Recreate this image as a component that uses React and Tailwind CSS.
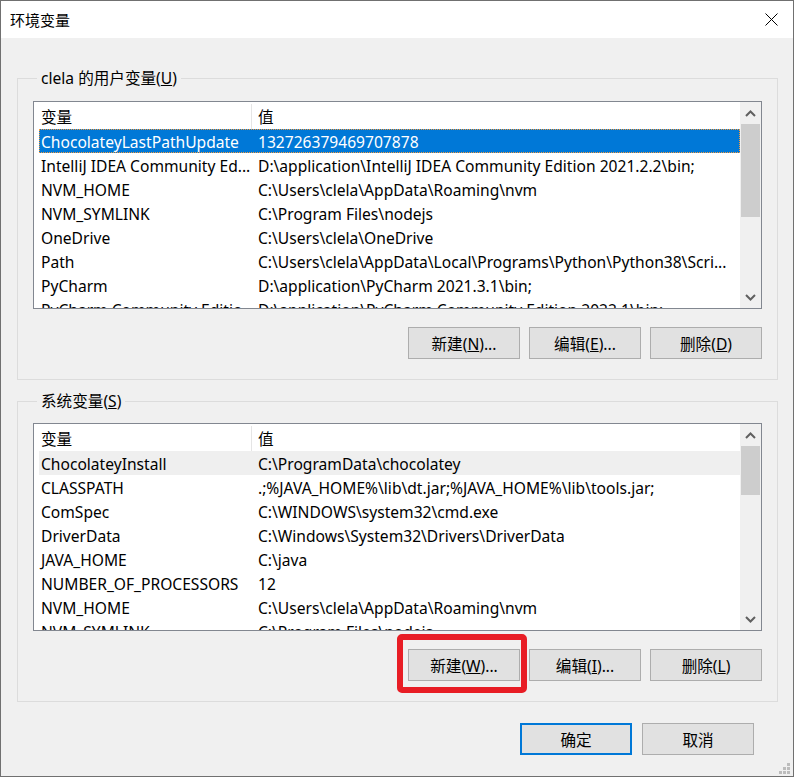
import React from "react";

const userVars = [
  ["ChocolateyLastPathUpdate", "132726379469707878"],
  ["IntelliJ IDEA Community Ed...", "D:\\application\\IntelliJ IDEA Community Edition 2021.2.2\\bin;"],
  ["NVM_HOME", "C:\\Users\\clela\\AppData\\Roaming\\nvm"],
  ["NVM_SYMLINK", "C:\\Program Files\\nodejs"],
  ["OneDrive", "C:\\Users\\clela\\OneDrive"],
  ["Path", "C:\\Users\\clela\\AppData\\Local\\Programs\\Python\\Python38\\Scri..."],
  ["PyCharm", "D:\\application\\PyCharm 2021.3.1\\bin;"],
  ["PyCharm Community Editio...", "D:\\application\\PyCharm Community Edition 2022.1\\bin;"],
];

const systemVars = [
  ["ChocolateyInstall", "C:\\ProgramData\\chocolatey"],
  ["CLASSPATH", ".;%JAVA_HOME%\\lib\\dt.jar;%JAVA_HOME%\\lib\\tools.jar;"],
  ["ComSpec", "C:\\WINDOWS\\system32\\cmd.exe"],
  ["DriverData", "C:\\Windows\\System32\\Drivers\\DriverData"],
  ["JAVA_HOME", "C:\\java"],
  ["NUMBER_OF_PROCESSORS", "12"],
  ["NVM_HOME", "C:\\Users\\clela\\AppData\\Roaming\\nvm"],
  ["NVM_SYMLINK", "C:\\Program Files\\nodejs"],
];

function Chevron({ up }) {
  return (
    <svg width="11" height="7" viewBox="0 0 11 7">
      <polyline
        points={up ? "1,6 5.5,1.5 10,6" : "1,1 5.5,5.5 10,1"}
        fill="none"
        stroke="#606060"
        strokeWidth="2"
      />
    </svg>
  );
}

// Win32-style list view with a two-column header and a vertical scrollbar
function VarList({ rows, selected, focused, thumbTop, thumbHeight }) {
  return (
    <div className="flex h-[208px] border border-[#828790] bg-white overflow-hidden">
      <div className="flex-1 flex flex-col overflow-hidden">
        <div className="flex h-[27px] shrink-0 items-center pt-[2px]">
          <div className="w-[218px] h-full flex items-center pl-[7px] border-r border-[#e5e5e5]">变量</div>
          <div className="pl-[6px]">值</div>
        </div>
        {rows.map(([name, value], i) => {
          const isSel = i === selected;
          const rowCls = isSel
            ? focused
              ? "bg-[#0078d7] text-white outline-1 outline-dotted -outline-offset-1 outline-[#f59a3c]"
              : "bg-[#efefef]"
            : "";
          return (
            <div key={name} className={`flex h-[24px] shrink-0 items-center pt-px ml-[5px] whitespace-nowrap ${rowCls}`}>
              <div className="w-[213px] shrink-0 pl-[2px] overflow-hidden">{name}</div>
              <div className="pl-[6px] overflow-hidden">{value}</div>
            </div>
          );
        })}
      </div>
      <div className="w-[21px] shrink-0 flex flex-col bg-[#f0f0f0]">
        <div className="h-[22px] flex items-center justify-center">
          <Chevron up />
        </div>
        <div className="flex-1 relative">
          <div
            className="absolute left-[1px] right-[1px] bg-[#cdcdcd]"
            style={{ top: thumbTop, height: thumbHeight }}
          />
        </div>
        <div className="h-[22px] flex items-center justify-center">
          <Chevron />
        </div>
      </div>
    </div>
  );
}

function Button({ children, primary }) {
  return (
    <button
      className={`w-[112px] h-[32px] bg-[#e1e1e1] flex items-center justify-center pt-px ${
        primary ? "border-2 border-[#0078d7]" : "border border-[#adadad]"
      }`}
    >
      {children}
    </button>
  );
}

function Group({ label, children }) {
  return (
    <fieldset className="border border-[#dcdcdc] px-[15px] pb-[20px]">
      <legend className="ml-[4px] px-[4px] leading-[20px]">{label}</legend>
      {children}
    </fieldset>
  );
}

export default function App() {
  return (
    <div
      className="relative w-[794px] h-[777px] border border-[#707070] bg-[#f0f0f0] flex flex-col text-[15.6px] leading-[20px] text-black"
      style={{ fontFamily: '"Noto Sans", "Noto Sans CJK SC", sans-serif' }}
    >
      {/* Title bar */}
      <div className="h-[37px] shrink-0 bg-white flex items-center justify-between pl-[9px] pr-[15px]">
        <span className="text-[15px]">环境变量</span>
        <svg width="13" height="13" viewBox="0 0 13 13">
          <path d="M0.5 0.5 L12.5 12.5 M12.5 0.5 L0.5 12.5" stroke="#000" strokeWidth="1" />
        </svg>
      </div>

      <div className="flex flex-col pl-[16px] pr-[15px] pt-[30px]">
        <Group
          label={
            <>
              clela 的用户变量(<u>U</u>)
            </>
          }
        >
          <div className="mt-[13px]">
            <VarList rows={userVars} selected={0} focused thumbTop={0} thumbHeight={93} />
          </div>
          <div className="mt-[18px] flex justify-end gap-[9px]">
            <Button>新建(<u>N</u>)...</Button>
            <Button>编辑(<u>E</u>)...</Button>
            <Button>删除(<u>D</u>)</Button>
          </div>
        </Group>

        <div className="mt-[11px]">
          <Group
            label={
              <>
                系统变量(<u>S</u>)
              </>
            }
          >
            <div className="mt-[12px]">
              <VarList rows={systemVars} selected={0} thumbTop={0} thumbHeight={49} />
            </div>
            <div className="mt-[18px] flex justify-end gap-[9px]">
              <div className="relative">
                <Button>新建(<u>W</u>)...</Button>
                {/* red highlight frame */}
                <div className="absolute -left-[11px] -top-[15px] -right-[7px] -bottom-[12px] border-[6px] border-[#e81d25] rounded-[5px] pointer-events-none" />
              </div>
              <Button>编辑(<u>I</u>)...</Button>
              <Button>删除(<u>L</u>)</Button>
            </div>
          </Group>
        </div>

        <div className="mt-[21px] mr-[24px] flex justify-end gap-[10px]">
          <Button primary>确定</Button>
          <Button>取消</Button>
        </div>
      </div>

      {/* size grip */}
      <svg className="absolute right-[3px] bottom-[2px]" width="11" height="12" viewBox="0 0 11 12">
        <g fill="#bcbcbc">
          <rect x="8" y="1" width="3" height="3" />
          <rect x="4" y="5" width="3" height="3" />
          <rect x="8" y="5" width="3" height="3" />
          <rect x="0" y="9" width="3" height="3" />
          <rect x="4" y="9" width="3" height="3" />
          <rect x="8" y="9" width="3" height="3" />
        </g>
      </svg>
    </div>
  );
}
